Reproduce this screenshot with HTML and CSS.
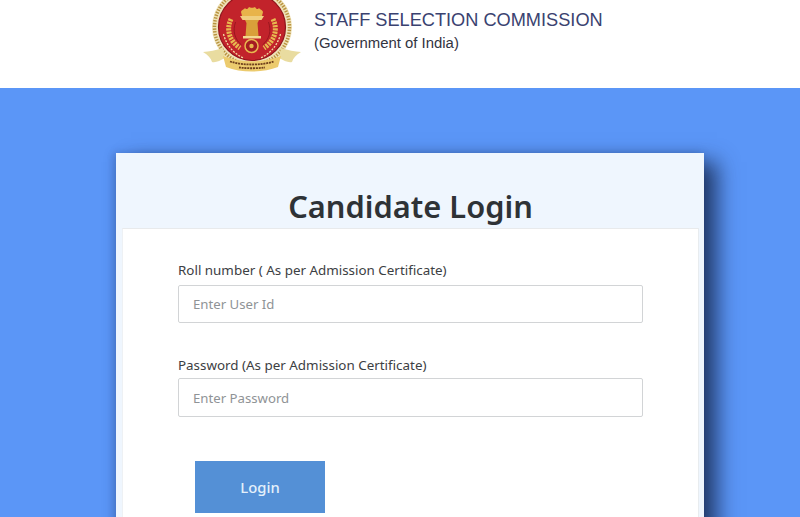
FILE: index.html
```html
<!DOCTYPE html>
<html lang="en">
<head>
<meta charset="utf-8">
<title>Candidate Login</title>
<link rel="stylesheet" href="styles.css">
</head>
<body>
<header class="top">
  <svg class="logo" width="98" height="74" viewBox="0 0 98 74" aria-hidden="true">
    <circle cx="49" cy="27" r="40" fill="#efe2b8"/>
    <circle cx="49" cy="27" r="37.5" fill="none" stroke="#b8933f" stroke-width="3.5" stroke-dasharray="1.4 1.4"/>
    <circle cx="49" cy="27" r="33.5" fill="#c2232b"/>
    <circle cx="49" cy="27" r="33.5" fill="none" stroke="#8f141c" stroke-width="1.2"/>
    <path d="M38 12c1-3 3-2 4-4 1 2 3 1 4-1 1 1 5 1 6 0 1 2 3 3 4 1 1 2 3 1 4 4l-1 4H39z" fill="#e8b44a"/>
    <path d="M37 16h24l-2.500 4H39.500z" fill="#f0cf7e"/>
    <path d="M42 20h14l-1.500 3 1 13H42.500l1-13z" fill="#d99f3a"/>
    <path d="M40 36h18v2.500H40z" fill="#f3d98f"/>
    <path d="M28 19c-5 10-2 22 9 29M70 19c5 10 2 22-9 29" fill="none" stroke="#e8b84f" stroke-width="5" stroke-dasharray="2.200 1"/>
    <path d="M32.500 22c-3 9-1 17 6 23M65.500 22c3 9 1 17-6 23" fill="none" stroke="#8f141c" stroke-width=".8"/>
    <path d="M20.500 34c3 12 11 20 20 24M77.500 34c-3 12-11 20-20 24" fill="none" stroke="#f4dfa6" stroke-width="1.300" stroke-dasharray="2 1.300"/>
    <circle cx="48.500" cy="46" r="6.500" fill="#a51c22" stroke="#e8b84f" stroke-width="1.500"/>
    <circle cx="48.500" cy="46" r="2.200" fill="#e8b84f"/>
    <path d="M0 52c6-.5 13-1.500 20-4l2 10c-5 2.500-9 5-13 4-1-4-4-7-9-10z" fill="#e9dca0"/>
    <path d="M98 52c-6-.5-13-1.500-20-4l-2 10c5 2.500 9 5 13 4 1-4 4-7 9-10z" fill="#e9dca0"/>
    <path d="M20 56c18 7 40 7 58 0l-3 11c-15 6-37 6-52 0z" fill="#eccb6e"/>
    <path d="M27 61.500c13 4 31 4 44 0M36 67.500c8 1 18 1 26 0" fill="none" stroke="#6e3f1c" stroke-width="1.800" stroke-dasharray="2 .8"/>
  </svg>
  <div class="org">
    <div class="org-name">STAFF SELECTION COMMISSION</div>
    <div class="org-sub">(Government of India)</div>
  </div>
</header>
<main class="stage">
  <section class="card">
    <h1 class="card-title">Candidate Login</h1>
    <form class="card-body">
      <label class="field">
        <span class="field-label">Roll number ( As per Admission Certificate)</span>
        <input class="field-input" type="text" placeholder="Enter User Id">
      </label>
      <label class="field">
        <span class="field-label field-label-tight">Password (As per Admission Certificate)</span>
        <input class="field-input field-input-tall" type="password" placeholder="Enter Password">
      </label>
      <button class="login" type="button">Login</button>
    </form>
  </section>
</main>
</body>
</html>
```
FILE: styles.css
```css
* { box-sizing: border-box; }
html, body { margin: 0; height: 100%; overflow: hidden; }
body {
  display: flex;
  flex-direction: column;
  background: #5b96f7;
  font-family: "Noto Sans", "Open Sans", sans-serif;
}
.top {
  flex: none;
  height: 88px;
  background: #fff;
  display: flex;
  align-items: flex-start;
  padding-left: 203px;
  gap: 13px;
}
.logo { flex: none; }
.org { padding-top: 10px; font-family: "Liberation Sans", Arial, sans-serif; }
.org-name { font-size: 18.2px; line-height: 21px; color: #3a4270; white-space: nowrap; }
.org-sub { font-size: 14.9px; line-height: 20px; margin-top: 2px; color: #33343f; }
.stage {
  flex: 1;
  min-height: 0;
  padding: 65px 96px 0 116px;
  overflow: hidden;
}
.card {
  height: 420px;
  background: #eff6fe;
  padding: 0 5px 0 6px;
  box-shadow: 14px 8px 20px -1px rgba(20, 35, 70, 0.8), -3px 0 8px rgba(40, 70, 130, 0.35);
}
.card-title {
  margin: 0;
  height: 75px;
  padding-top: 32px;
  text-align: center;
  font-size: 30.8px;
  line-height: 42px;
  font-weight: 600;
  color: #2e3236;
}
.card-body {
  height: 345px;
  background: #fff;
  border-top: 1px solid #e8eaec;
  border-left: 1px solid #eef1f4;
  border-right: 1px solid #e8ecef;
  padding: 32px 56px 0 55px;
  display: flex;
  flex-direction: column;
  align-items: flex-start;
}
.field { display: block; width: 465px; margin-bottom: 33px; }
.field-label { display: block; font-size: 13.4px; line-height: 18px; margin-bottom: 6px; color: #3c4043; }
.field-label-tight { margin-bottom: 4px; }
.field-input {
  display: block;
  width: 100%;
  height: 38px;
  padding: 0 14px;
  border: 1px solid #d2d4d6;
  border-radius: 2px;
  background: #fff;
  font: 13.2px "Noto Sans", sans-serif;
  outline: none;
}
.field-input-tall { height: 39px; }
.field-input::placeholder { color: #8f9396; opacity: 1; }
.login {
  margin: 11px 0 0 17px;
  width: 130px;
  height: 52px;
  border: 0;
  background: #5490d6;
  color: #e4f0fb;
  font: 500 14.8px "Noto Sans", sans-serif;
}
```
